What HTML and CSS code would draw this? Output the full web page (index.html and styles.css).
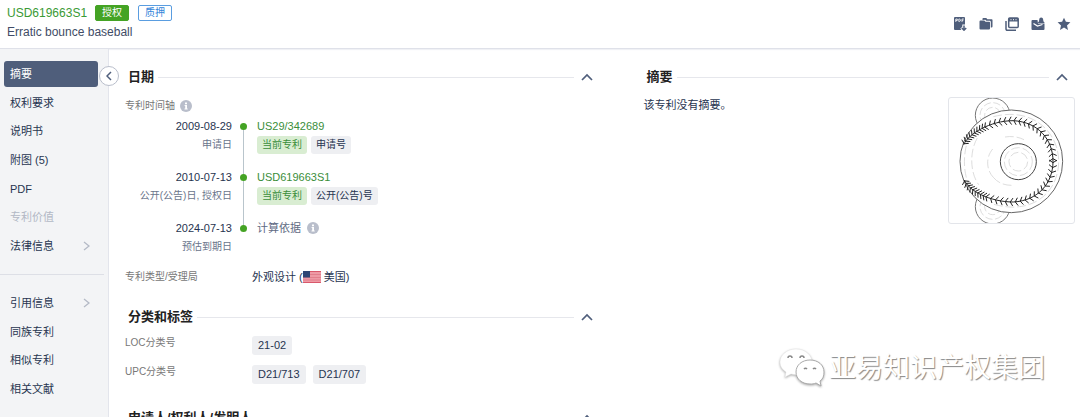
FILE: index.html
```
<!DOCTYPE html>
<html lang="zh-CN">
<head>
    <meta charset="UTF-8">
    <title>USD619663S1</title>
    <link rel="stylesheet" href="styles.css">
</head>
<body>
    <svg class="defs" aria-hidden="true">
        <symbol id="up" viewBox="0 0 12 8"><path d="M1 7l5-5 5 5" fill="none" stroke="#4f5e7b" stroke-width="1.7"/></symbol>
        <symbol id="next" viewBox="0 0 7 10"><path d="M1 1l5 4-5 4" fill="none" stroke="#b4bac6" stroke-width="1.3"/></symbol>
        <symbol id="info" viewBox="0 0 12 12"><circle cx="6" cy="6" r="6" fill="#b9becb"/><path d="M5 2.6h2v1.6H5zM4.6 5H7v3.4h.7v1H4.5v-1h.7V6h-.6z" fill="#fff"/></symbol>
    </svg>

    <header class="header">
        <div>
            <div class="title-row">
                <a class="patent-no" href="#">USD619663S1</a>
                <span class="badge badge-green">授权</span>
                <span class="badge badge-blue">质押</span>
            </div>
            <h1>Erratic bounce baseball</h1>
        </div>
        <div class="tools">
            <button aria-label="PDF"><svg viewBox="0 0 14 14"><path d="M2 0h9a1 1 0 0 1 1 1v11a1 1 0 0 1-1 1H2a1 1 0 0 1-1-1V1a1 1 0 0 1 1-1z" fill="#4f5e7b"/><path d="M2.800 5V2h1.500v1.500H2.800M5.800 2v2.500h.8l.7-.5V2.500L6.600 2zM9 5V2h1.800M9 3.400h1.300" fill="none" stroke="#fff" stroke-width=".8"/><path d="M11 7.500v5M8.500 10.500l2.500 2.500 2.500-2.500" fill="none" stroke="#fff" stroke-width="3.400"/><path d="M11 8.500v4.500M8.800 11l2.200 2.200 2.200-2.200" fill="none" stroke="#4f5e7b" stroke-width="1.500"/></svg></button>
            <button aria-label="文件夹"><svg viewBox="0 0 14 14"><path d="M3.500 3V1.800a.8.8 0 0 1 .8-.8h3l1 1.200h4.400a.8.8 0 0 1 .8.800v6.500a1 1 0 0 1-1 1h-.7V4.500l-.8-.8H7.300L6.300 2.700z" fill="#4f5e7b"/><path d="M1.500 3.400h3.800l1.200 1.300h3.700a.8.8 0 0 1 .8.800v6a1 1 0 0 1-1 1H1.500a1 1 0 0 1-1-1V4.400a1 1 0 0 1 1-1z" fill="#4f5e7b"/></svg></button>
            <button aria-label="复制"><svg viewBox="0 0 14 14"><path d="M1 4v8a1.200 1.200 0 0 0 1.200 1.200H11" fill="none" stroke="#4f5e7b" stroke-width="1.500"/><rect x="3.700" y="1" width="9.500" height="9.500" rx="1" fill="#fff" stroke="#4f5e7b" stroke-width="1.500"/><path d="M3.700 1h9.500v3.500H3.700z" fill="#4f5e7b"/><path d="M5.500 2.700h1M8 2.700h1M10.500 2.700h1" stroke="#fff"/></svg></button>
            <button aria-label="提醒"><svg viewBox="0 0 14 14"><path d="M1.500 3h5l.5 3.500h6.500V12a1 1 0 0 1-1 1h-11a1 1 0 0 1-1-1V4a1 1 0 0 1 1-1z" fill="#4f5e7b"/><path d="M2.500 6.500L6.500 9l5-1.500" fill="none" stroke="#fff" stroke-width="1.300"/><path d="M7 5.500c1.200-.7 1-1.700 1.200-2.700C8.400 1.300 9 .5 10.200.5s1.800.8 2 2.300c.2 1 0 2 1.300 2.700V6H7z" fill="#4f5e7b"/></svg></button>
            <button aria-label="收藏"><svg viewBox="0 0 14 14"><path d="M7 .7l1.900 4.100 4.500.5L10 8.400l1 4.500-4-2.300-4 2.300 1-4.500L.6 5.300l4.500-.5z" fill="#4f5e7b"/></svg></button>
        </div>
    </header>

    <div class="body">
        <nav class="sidebar">
            <ul class="menu menu-top">
                <li><a class="active" href="#">摘要</a></li>
                <li><a href="#">权利要求</a></li>
                <li><a href="#">说明书</a></li>
                <li><a href="#">附图 (5)</a></li>
                <li><a href="#">PDF</a></li>
                <li><a class="disabled" href="#">专利价值</a></li>
                <li><a href="#">法律信息<svg class="next"><use href="#next"/></svg></a></li>
            </ul>
            <ul class="menu menu-bottom">
                <li><a href="#">引用信息<svg class="next"><use href="#next"/></svg></a></li>
                <li><a href="#">同族专利</a></li>
                <li><a href="#">相似专利</a></li>
                <li><a href="#">相关文献</a></li>
            </ul>
            <button class="collapse" aria-label="收起"><svg viewBox="0 0 6 10"><path d="M5 1L1 5l4 4" fill="none" stroke="#4f5e7b" stroke-width="1.500"/></svg></button>
        </nav>

        <main class="main">
            <div class="col">
                <section>
                    <div class="heading"><h2>日期</h2><button aria-label="收起日期"><svg><use href="#up"/></svg></button></div>
                    <div class="label timeline-label">专利时间轴 <svg class="info"><use href="#info"/></svg></div>
                    <ol class="timeline">
                        <li>
                            <div class="when"><time>2009-08-29</time><small>申请日</small></div>
                            <div class="what"><a href="#">US29/342689</a><div class="tags"><span class="tag green">当前专利</span><span class="tag">申请号</span></div></div>
                        </li>
                        <li>
                            <div class="when"><time>2010-07-13</time><small>公开(公告)日, 授权日</small></div>
                            <div class="what"><a href="#">USD619663S1</a><div class="tags"><span class="tag green">当前专利</span><span class="tag">公开(公告)号</span></div></div>
                        </li>
                        <li>
                            <div class="when"><time>2024-07-13</time><small>预估到期日</small></div>
                            <div class="what"><span class="basis">计算依据 <svg class="info"><use href="#info"/></svg></span></div>
                        </li>
                    </ol>
                    <div class="row type-row">
                        <span class="label">专利类型/受理局</span>
                        <span class="value">外观设计 (<svg class="flag" viewBox="0 0 18 12"><path d="M0 0h18v12H0z" fill="#ee9aa5"/><path d="M0 .5h18M0 11.500h18" stroke="#d9586b"/><path d="M0 3.500h18M0 6.500h18M0 9h18" stroke="#e27f8c"/><path d="M0 0h7v6.500H0z" fill="#2f4674"/></svg> 美国)</span>
                    </div>
                </section>
                <section>
                    <div class="heading"><h2>分类和标签</h2><button aria-label="收起分类和标签"><svg><use href="#up"/></svg></button></div>
                    <div class="row"><span class="label">LOC分类号</span><span class="codes"><span class="code">21-02</span></span></div>
                    <div class="row"><span class="label">UPC分类号</span><span class="codes"><span class="code">D21/713</span><span class="code">D21/707</span></span></div>
                </section>
                <section class="people">
                    <div class="heading"><h2>申请人/权利人/发明人</h2><button aria-label="收起申请人"><svg><use href="#up"/></svg></button></div>
                </section>
            </div>

            <section class="col">
                <div class="heading"><h2>摘要</h2><button aria-label="收起摘要"><svg><use href="#up"/></svg></button></div>
                <div class="abstract">
                    <p>该专利没有摘要。</p>
                    <svg class="drawing" viewBox="57 40 375 375" fill="none" stroke="#777" stroke-width="3">
                        <circle cx="188" cy="92" r="52"/>
                        <circle cx="188" cy="366" r="52"/>
                        <g stroke="#ccc" stroke-width="2" stroke-dasharray="22 8">
                            <circle cx="188" cy="92" r="38"/><circle cx="188" cy="92" r="24"/>
                            <circle cx="188" cy="366" r="38"/><circle cx="188" cy="366" r="24"/>
                        </g>
                        <circle cx="244" cy="230" r="154" fill="#fff" stroke="#666"/>
                        <g stroke="#ccc" stroke-width="2" stroke-dasharray="26 9">
                            <path d="M120 150C98 200 98 260 118 305M142 160C118 200 120 265 146 300M188 193C164 222 172 260 190 278"/>
                            <path d="M190 278Q210 302 245 302M225 157Q255 152 282 165"/>
                            <path d="M190 96C310 65 386 145 386 230C386 320 310 394 188 358"/>
                            <circle cx="265" cy="231" r="42"/><circle cx="265" cy="231" r="28"/>
                        </g>
                        <circle cx="265" cy="231" r="54" stroke="#444"/>
                        <g id="seams" stroke="#222" stroke-width="3">
                            <path d="M101 180C115 148 180 108 250 108C325 112 369 165 369 230"/>
                            <path d="M103 286C116 318 180 352 250 352C325 348 369 295 369 230"/>
                        </g>
                    </svg>
                </div>
            </section>
        </main>
    </div>

    <div class="watermark">
        <svg viewBox="0 0 46 40" fill="#fff" stroke="#e4e4e4" stroke-width=".5">
            <path d="M17 1C8 1 1 7 1 14c0 5 3 8 6 10l-1 5 6-3c10 3 21-3 21-12C33 7 26 1 17 1z"/>
            <path d="M31 12c-8 0-14 5-14 12s6 12 14 12c2 0 4 0 6-1l5 3-1-5c3-2 4-5 4-9 0-7-6-12-14-12z" stroke="#aaa" stroke-width="1"/>
            <path d="M9 10a2 2 0 0 1 4 0M21 10a2 2 0 0 1 4 0M25 21a2 2 0 0 1 3 0M34 21a2 2 0 0 1 3 0" fill="none" stroke="#888" stroke-width="1.500"/>
        </svg>
        <span>亚易知识产权集团</span>
    </div>
    <script src="script.js"></script>
</body>
</html>
```
FILE: styles.css
```
* {
    box-sizing: border-box;
}

body {
    display: flex;
    flex-direction: column;
    height: 100vh;
    margin: 0;
    overflow: hidden;
    font: 11px/16px "Liberation Sans", "Noto Sans CJK SC", sans-serif;
    color: #273450;
    background-color: #fff;
}

h1, h2, p, ul, ol {
    margin: 0;
    padding: 0;
    list-style: none;
}

a {
    color: inherit;
    text-decoration: none;
}

button {
    display: flex;
    padding: 0;
    border: none;
    background: none;
    cursor: pointer;
}

.defs {
    display: none;
}

.header {
    display: flex;
    justify-content: space-between;
    flex-shrink: 0;
    padding: 5px 9px 8px 7px;
    border-bottom: 1px solid #dfe1e9;
    box-shadow: 0 1px 1px #f0f1f5;
}

.title-row {
    display: flex;
    align-items: center;
    height: 16px;
}

.patent-no {
    margin-right: 8px;
    font-size: 12px;
    color: #3a9a35;
}

.badge {
    width: 34px;
    height: 16px;
    margin-right: 9px;
    border: 1px solid #44a324;
    border-radius: 2px;
    font-size: 10px;
    line-height: 14px;
    text-align: center;
}

.badge-green {
    background-color: #44a324;
    color: #fff;
}

.badge-blue {
    border-color: #5a9de0;
    color: #3384d9;
}

h1 {
    margin-top: 3px;
    font-size: 12px;
    font-weight: normal;
    color: #414c66;
}

.tools {
    display: flex;
    align-items: center;
    gap: 12px;
    padding-top: 2px;
}

.tools svg {
    width: 14px;
    height: 14px;
}

.body {
    display: flex;
    flex: 1;
    min-height: 0;
}

.sidebar {
    position: relative;
    width: 109px;
    flex-shrink: 0;
    padding-top: 11px;
    border-right: 1px solid #e3e5ec;
    background-color: #f3f4f6;
}

.menu {
    display: grid;
    grid-auto-rows: 1fr;
    align-items: center;
    margin-right: 4px;
    padding: 0 6px 0 4px;
}

.menu-top {
    height: 200px;
}

.menu-bottom {
    height: 143px;
    margin-top: 14px;
    padding-top: 14px;
    padding-bottom: 14px;
    border-top: 1px solid #dddfe6;
}

.menu a {
    display: flex;
    align-items: center;
    justify-content: space-between;
    height: 26px;
    padding: 0 8px 0 6px;
    border-radius: 3px;
}

.menu .active {
    background-color: #4f5e7b;
    color: #fff;
}

.menu .disabled {
    color: #b2b8c5;
}

.next {
    width: 7px;
    height: 10px;
}

.collapse {
    position: absolute;
    top: 17px;
    right: -11px;
    align-items: center;
    justify-content: center;
    width: 20px;
    height: 20px;
    border: 1px solid #b9becb;
    border-radius: 50%;
    background-color: #fff;
}

.collapse svg {
    width: 6px;
    height: 10px;
}

.main {
    display: grid;
    grid-template-columns: 11fr 10fr;
    gap: 44px;
    flex: 1;
    padding: 16px 5px 0 16px;
    overflow: hidden;
}

.heading {
    display: flex;
    align-items: center;
    height: 24px;
    padding: 0 7px 0 3px;
}

.heading::after {
    content: "";
    flex: 1;
    height: 1px;
    margin: 0 7px 0 4px;
    background-color: #e6e7ec;
}

.heading h2 {
    font-size: 13px;
    color: #222;
}

.heading button {
    order: 1;
}

.heading svg {
    width: 12px;
    height: 8px;
}

.label {
    font-size: 10px;
    color: #777;
}

.info {
    width: 12px;
    height: 12px;
    margin-left: 3px;
}

.timeline-label {
    display: flex;
    align-items: center;
    gap: 2px;
    height: 16px;
    margin-top: 9px;
}

.timeline {
    margin-top: 4px;
}

.timeline li {
    display: flex;
    height: 51px;
}

.when {
    display: flex;
    flex-direction: column;
    gap: 3px;
    width: 107px;
    text-align: right;
}

.when small {
    font-size: 10px;
    color: #6a758b;
}

.what {
    position: relative;
    padding-left: 25px;
    color: #3a8e3a;
}

.what::before {
    content: "";
    position: absolute;
    top: 5px;
    left: 8px;
    width: 7px;
    height: 7px;
    border-radius: 50%;
    background-color: #44a324;
}

.timeline li:not(:last-child) .what::after {
    content: "";
    position: absolute;
    top: 12px;
    bottom: -5px;
    left: 11px;
    width: 1px;
    background-color: #b9c5cc;
}

.timeline li:last-child {
    height: 49px;
}

.tags, .codes {
    display: flex;
    gap: 4px;
}

.tags {
    margin-top: 2px;
}

.tag, .code {
    padding: 0 6px;
    border-radius: 3px;
    background-color: #eeeff2;
    color: #273450;
}

.tag {
    padding: 0 5px;
    font-size: 10px;
    line-height: 18px;
}

.tag.green {
    background-color: #d9edd2;
    color: #3a8e3a;
}

.basis {
    display: flex;
    align-items: center;
    gap: 3px;
    color: #5f6b83;
}

.row {
    display: flex;
    height: 29px;
}

.row .label {
    width: 127px;
}

.type-row {
    height: 36px;
}

.flag {
    width: 18px;
    height: 12px;
    vertical-align: -2px;
}

section .heading + .row {
    margin-top: 6px;
}

.codes {
    gap: 7px;
}

.code {
    height: 19px;
    margin-top: 1px;
    line-height: 19px;
}

.people {
    margin-top: 13px;
}

.abstract {
    display: flex;
    justify-content: space-between;
    margin-top: 8px;
}

.drawing {
    width: 127px;
    height: 127px;
    border: 1px solid #e3e5ea;
    border-radius: 3px;
}

.watermark {
    position: absolute;
    right: 35px;
    bottom: 29px;
    display: flex;
    align-items: center;
    gap: 4px;
    font-size: 27px;
    line-height: 40px;
    color: #fff;
    text-shadow: 1px 1px 1px #888;
}

.watermark svg {
    width: 46px;
    height: 40px;
    filter: drop-shadow(0 1px 1px #aaa);
}
```
FILE: script.js
```
// stitches along both seams of the ball
const seams = document.getElementById('seams');
seams.querySelectorAll('path').forEach(seam => {
    const length = seam.getTotalLength();
    let d = '';
    let at = 3;
    while (at < length) {
        const p = seam.getPointAtLength(at);
        const q = seam.getPointAtLength(at + 1);
        const angle = Math.atan2(q.y - p.y, q.x - p.x);
        [-1, 1].forEach(turn => {
            const x = p.x + 14 * Math.cos(angle + turn);
            const y = p.y + 14 * Math.sin(angle + turn);
            d += `M${p.x} ${p.y}L${x} ${y}`;
        });
        // stitches get closer together near the left edge
        at += at < 80 ? 9 : 15;
    }
    const stitches = document.createElementNS('http://www.w3.org/2000/svg', 'path');
    stitches.setAttribute('d', d);
    seams.appendChild(stitches);
});
```
